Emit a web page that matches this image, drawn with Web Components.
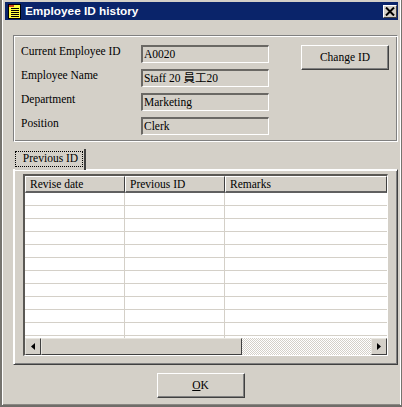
<!DOCTYPE html>
<html>
<head>
<meta charset="utf-8">
<style>
    html, body { margin: 0; padding: 0; background: #d4d0c8; }
    body { width: 402px; height: 407px; overflow: hidden; font: 11.5px "Liberation Serif", "Noto Sans CJK TC", serif; color: #000; }
</style>
</head>
<body>
<emp-dialog caption="Employee ID history">
    <emp-info-group>
        <emp-field label="Current Employee ID" value="A0020"></emp-field>
        <emp-field label="Employee Name" value="Staff 20 員工20"></emp-field>
        <emp-field label="Department" value="Marketing"></emp-field>
        <emp-field label="Position" value="Clerk"></emp-field>
        <emp-button slot="action" style="width:88px;height:25px">Change ID</emp-button>
    </emp-info-group>
    <emp-tabs caption="Previous ID">
        <emp-grid></emp-grid>
    </emp-tabs>
    <emp-button slot="footer" style="width:88px;height:25px"><u>O</u>K</emp-button>
</emp-dialog>

<script>
class EmpDialog extends HTMLElement {
    constructor() {
        super()
        this.attachShadow({mode: 'open'})
        this.shadowRoot.innerHTML = `
            <style>
                :host { display: block; width: 402px; height: 407px; box-sizing: border-box; background: #d4d0c8;
                        border-left: 2px solid #75736e; border-right: 1px solid #75736e; border-bottom: 2px solid #6f6d69; padding: 2px 3px 0 3px;
                        box-shadow: inset 1px 0 0 #fff, inset -1px 0 0 #fff, inset 0 -1px 0 #8a8883; }
                .title { height: 18px; display: flex; align-items: center; background: #0a246a; color: #fff; padding: 0 1px 0 3px; gap: 4px;
                         font: bold 11.8px "Liberation Sans", sans-serif; }
                .title svg { flex: none; }
                .title span { flex: 1; }
                .close { width: 14px; height: 13px; box-sizing: border-box; background: #d4d0c8; display: flex; align-items: center; justify-content: center;
                         border: 1px solid; border-color: #fff #404040 #404040 #fff; }
                .body { padding: 15px 0 0 8px; }
                .footer { display: flex; justify-content: center; padding-top: 8px; margin-left: -2px; }
            </style>
            <div class="title">
                <svg width="13" height="15" viewBox="0 0 13 15">
                    <rect width="13" height="15" fill="#000"/>
                    <rect x="1" y="1" width="11" height="13" fill="#ffff40"/>
                    <rect x="1" y="1" width="5" height="2" fill="#d04020"/>
                    <path d="M3 4.500h8M3 6.500h8M3 8.500h8M3 10.500h8M3 12.500h8" stroke="#000"/>
                </svg>
                <span></span>
                <div class="close">
                    <svg width="10" height="9" viewBox="0 0 10 9"><path d="M1 .5l8 8M9 .5l-8 8" stroke="#000" stroke-width="2" fill="none"/></svg>
                </div>
            </div>
            <div class="body"><slot></slot></div>
            <div class="footer"><slot name="footer"></slot></div>
        `
        this.shadowRoot.querySelector('span').textContent = this.getAttribute('caption')
    }
}

class EmpInfoGroup extends HTMLElement {
    constructor() {
        super()
        this.attachShadow({mode: 'open'})
        this.shadowRoot.innerHTML = `
            <style>
                :host { display: flex; box-sizing: border-box; width: 385px; height: 107px; padding: 9px 7px 0 7px;
                        border: 1px solid; border-color: #808080 #fff #fff #808080;
                        box-shadow: inset 1px 1px 0 #fff, inset -1px -1px 0 #808080; }
                .fields { display: flex; flex-direction: column; gap: 6px; width: 280px; }
            </style>
            <div class="fields"><slot></slot></div>
            <div><slot name="action"></slot></div>
        `
    }
}

class EmpField extends HTMLElement {
    constructor() {
        super()
        this.attachShadow({mode: 'open'})
        this.shadowRoot.innerHTML = `
            <style>
                :host { display: flex; height: 18px; }
                .label { width: 120px; line-height: 13px; white-space: nowrap; }
                .value { width: 128px; height: 18px; box-sizing: border-box; border: 1px solid; border-width: 2px 1px 1px 2px;
                         border-color: #6a6864 #fff #fff #6a6864; padding: 0 0 0 1px; line-height: 15px; white-space: nowrap; }
            </style>
            <div class="label"></div>
            <div class="value"></div>
        `
        this.shadowRoot.querySelector('.label').textContent = this.getAttribute('label')
        this.shadowRoot.querySelector('.value').textContent = this.getAttribute('value')
    }
}

class EmpButton extends HTMLElement {
    constructor() {
        super()
        this.attachShadow({mode: 'open'})
        this.shadowRoot.innerHTML = `
            <style>
                :host { display: flex; align-items: center; justify-content: center; box-sizing: border-box; background: #d4d0c8; padding-bottom: 2px;
                        border: 1px solid; border-color: #fff #404040 #404040 #fff; box-shadow: inset -1px -1px 0 #808080; }
            </style>
            <slot></slot>
        `
    }
}

class EmpTabs extends HTMLElement {
    constructor() {
        super()
        this.attachShadow({mode: 'open'})
        this.shadowRoot.innerHTML = `
            <style>
                :host { display: block; width: 385px; margin-top: 7px; }
                .tab { width: 71px; height: 21px; margin-left: 2px; box-sizing: border-box; position: relative; z-index: 1;
                       border-right: 2px solid #404040; background: #d4d0c8; padding: 2px 1px 0 0; }
                .tab span { display: block; height: 16px; line-height: 15px; text-align: center; padding-left: 3px; box-sizing: border-box; outline: 1px dotted #000; outline-offset: -1px; }
                .pane { box-sizing: border-box; height: 196px; margin-top: -1px; padding: 4px 9px 9px 9px;
                        border: 1px solid; border-color: #fff #404040 #404040 #fff; box-shadow: inset 1px 1px 0 #fff, inset -1px -1px 0 #808080; }
            </style>
            <div class="tab"><span></span></div>
            <div class="pane"><slot></slot></div>
        `
        this.shadowRoot.querySelector('span').textContent = this.getAttribute('caption')
    }
}

class EmpGrid extends HTMLElement {
    constructor() {
        super()
        this.attachShadow({mode: 'open'})
        const rows = Array.from({length: 12}, () => '<div class="row"><i></i><i></i><i></i></div>').join('')
        this.shadowRoot.innerHTML = `
            <style>
                :host { display: flex; flex-direction: column; box-sizing: border-box; height: 182px; background: #fff; overflow: hidden;
                        border: 1px solid; border-width: 2px 1px 1px 2px; border-color: #5a5854 #fff #fff #5a5854; }
                .head, .row { display: grid; grid-template-columns: 100px 100px 1fr; flex: none; }
                .head { height: 17px; background: #d4d0c8; }
                .head div { box-sizing: border-box; padding-left: 4px; line-height: 14px; border: 1px solid; border-bottom-width: 2px; border-color: #fff #404040 #606060 #fff; }
                .rows { flex: 1; overflow: hidden; }
                .row { height: 13px; }
                .row i { box-sizing: border-box; border-right: 1px solid #d4d0c8; border-bottom: 1px solid #d4d0c8; }
                .row i:last-child { border-right: 0; }
                .scroll { flex: none; height: 17px; display: flex; background: repeating-conic-gradient(#d4d0c8 0 25%, #fff 0 50%) 0 0 / 2px 2px; }
                .btn, .thumb { box-sizing: border-box; background: #d4d0c8; border: 1px solid; border-color: #e8e6e0 #404040 #404040 #e8e6e0; display: flex; align-items: center; justify-content: center; }
                .btn { width: 16px; }
                .thumb { width: 201px; }
                .gap { flex: 1; }
            </style>
            <div class="head"><div>Revise date</div><div>Previous ID</div><div>Remarks</div></div>
            <div class="rows">${rows}</div>
            <div class="scroll">
                <div class="btn"><svg width="4" height="7"><path d="M4 0v7L0 3.500z"/></svg></div>
                <div class="thumb"></div>
                <div class="gap"></div>
                <div class="btn"><svg width="4" height="7"><path d="M0 0v7l4-3.500z"/></svg></div>
            </div>
        `
    }
}

customElements.define('emp-dialog', EmpDialog)
customElements.define('emp-info-group', EmpInfoGroup)
customElements.define('emp-field', EmpField)
customElements.define('emp-button', EmpButton)
customElements.define('emp-tabs', EmpTabs)
customElements.define('emp-grid', EmpGrid)
</script>
</body>
</html>
